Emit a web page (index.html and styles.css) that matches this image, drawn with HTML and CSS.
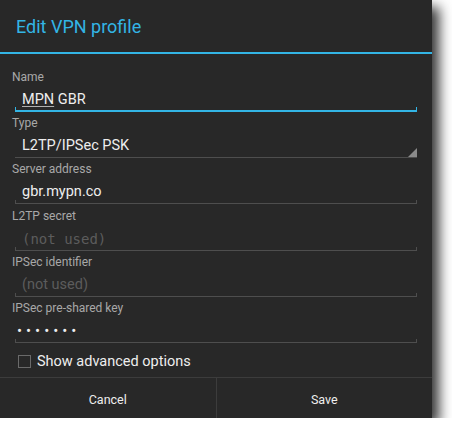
FILE: index.html
```html
<!DOCTYPE html>
<html lang="en">
<head>
    <meta charset="UTF-8">
    <title>Edit VPN profile</title>
    <link rel="stylesheet" href="styles.css">
</head>
<body>
    <div class="dialog">
        <div class="title">Edit VPN profile</div>
        <div class="form">
            <div class="group">
                <div class="label">Name</div>
                <div class="field active"><span class="composing">MPN</span> GBR</div>
            </div>
            <div class="group">
                <div class="label">Type</div>
                <div class="spinner">L2TP/IPSec PSK</div>
            </div>
            <div class="group">
                <div class="label">Server address</div>
                <div class="field">gbr.mypn.co</div>
            </div>
            <div class="group">
                <div class="label">L2TP secret</div>
                <div class="field hint mono">(not used)</div>
            </div>
            <div class="group">
                <div class="label">IPSec identifier</div>
                <div class="field hint">(not used)</div>
            </div>
            <div class="group">
                <div class="label">IPSec pre-shared key</div>
                <div class="field dots">&bull;&bull;&bull;&bull;&bull;&bull;&bull;</div>
            </div>
            <label class="check-row">
                <span class="checkbox"></span>
                <span>Show advanced options</span>
            </label>
        </div>
        <div class="buttons">
            <button>Cancel</button>
            <button>Save</button>
        </div>
    </div>
</body>
</html>
```

FILE: styles.css
```css
body {
    margin: 0;
    background-color: #ffffff;
    font-family: Roboto, "Noto Sans", sans-serif;
}
.dialog {
    width: 432px;
    height: 418px;
    background-color: #282828;
    color: #eeeeee;
    box-shadow: 7px 7px 12px rgba(0, 0, 0, 0.8);
    display: flex;
    flex-direction: column;
}
.title {
    height: 52px;
    line-height: 54px;
    padding-left: 16px;
    font-size: 18px;
    color: #33b5e5;
    border-bottom: 2px solid #33b5e5;
}
.form {
    flex: 1;
    padding: 15px 15px 0 12px;
}
.group {
    height: 46.2px;
}
.label {
    height: 16px;
    line-height: 16px;
    font-size: 12px;
    color: #a8a8a8;
}
.field, .spinner {
    position: relative;
    margin-left: 3px;
    height: 26px;
    padding-top: 6px;
    line-height: 18px;
    padding-left: 7px;
    font-size: 14.5px;
    box-sizing: border-box;
}
.field::after {
    content: "";
    position: absolute;
    left: 0;
    right: 0;
    bottom: -1px;
    height: 3px;
    border: 1px solid #4e4e4e;
    border-top: none;
}
.field.active::after {
    height: 3px;
    border-color: #33b5e5;
    border-bottom-width: 2px;
}
.spinner {
    border-bottom: 1px solid #4e4e4e;
    height: 27px;
}
.spinner::after {
    content: "";
    position: absolute;
    right: 0;
    bottom: 0;
    width: 0;
    height: 0;
    border-left: 9px solid transparent;
    border-bottom: 9px solid #8a8a8a;
}
.composing {
    text-decoration: underline;
    text-decoration-color: #b0b0b0;
    text-underline-offset: 2px;
}
.hint {
    color: #5c5c5c;
}
.mono {
    font-family: "DejaVu Sans Mono", monospace;
    font-size: 14px;
}
.dots {
    letter-spacing: 4px;
    font-size: 15px;
    padding-left: 2px;
}
.check-row {
    display: flex;
    align-items: center;
    gap: 6px;
    height: 30px;
    padding-left: 6px;
    font-size: 14.5px;
}
.checkbox {
    width: 11px;
    height: 11px;
    border: 1px solid #6a6a6a;
}
.buttons {
    display: flex;
    border-top: 1px solid #3c3c3c;
    height: 40px;
}
.buttons button {
    flex: 1;
    background: none;
    border: none;
    color: #eeeeee;
    font-family: Roboto, "Noto Sans", sans-serif;
    font-size: 12.5px;
    line-height: 44px;
    padding: 0;
}
.buttons button + button {
    border-left: 1px solid #3c3c3c;
}
```
